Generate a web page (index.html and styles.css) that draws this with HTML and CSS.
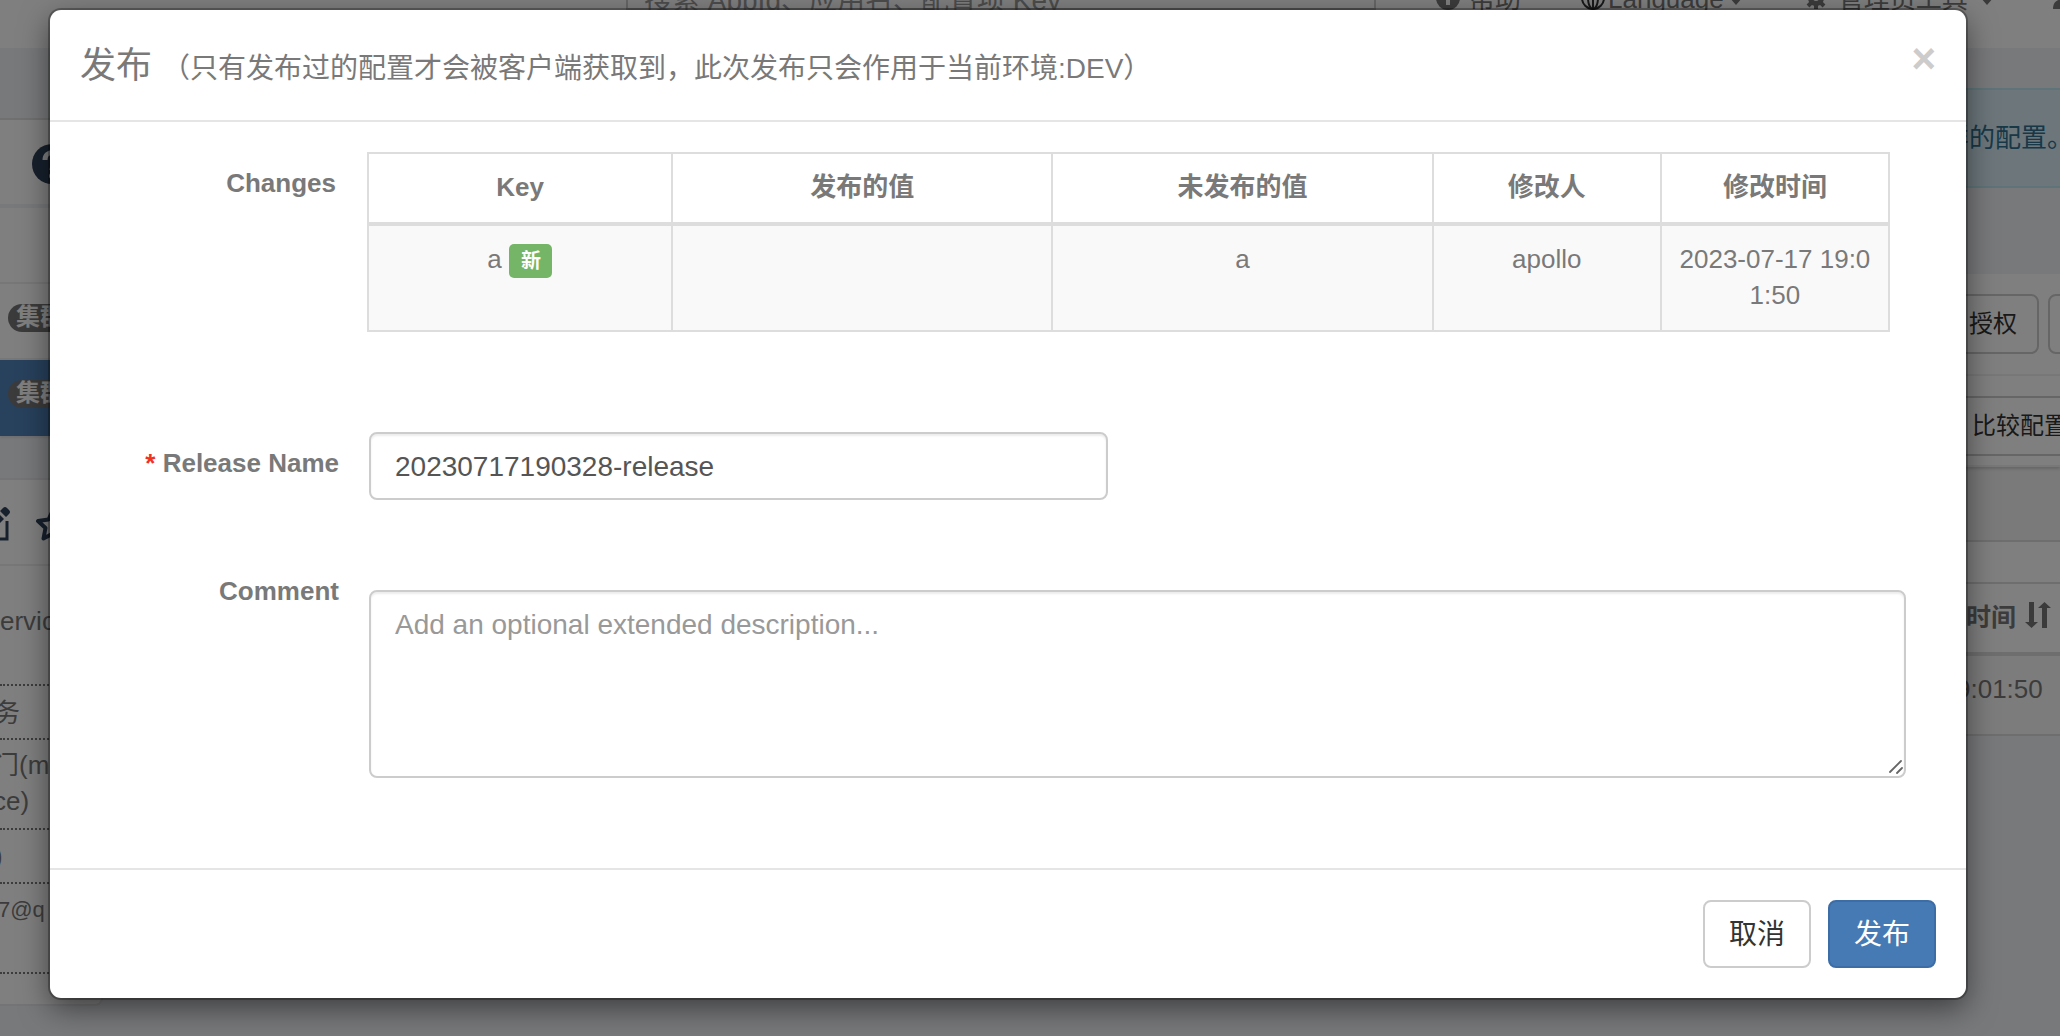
FILE: index.html
```html
<!DOCTYPE html>
<html lang="zh-CN">
<head>
<meta charset="utf-8">
<title>发布</title>
<link rel="stylesheet" href="styles.css">
</head>
<body>
<div class="page">
  <nav class="navbar">
    <div class="search">搜索 AppId、应用名、配置项 Key</div>
    <div class="nav-item nav-help">
      <svg width="24" height="24" viewBox="0 0 24 24"><circle cx="12" cy="12" r="12" fill="#777"/><path d="M12 5v14" stroke="#fff" stroke-width="4"/></svg>
      <span>帮助</span>
    </div>
    <div class="nav-item nav-lang">
      <svg width="24" height="24" viewBox="0 0 24 24" fill="none" stroke="#333" stroke-width="2"><circle cx="12" cy="12" r="11"/><ellipse cx="12" cy="12" rx="5" ry="11"/><path d="M12 1v22M1 12h22"/></svg>
      <span>Language</span><i class="caret"></i>
    </div>
    <div class="nav-item nav-admin">
      <svg width="22" height="22" viewBox="0 0 22 22"><circle cx="11" cy="11" r="5.500" fill="none" stroke="#777" stroke-width="5"/><path d="M11 0v4M11 18v4M0 11h4M18 11h4M3 3l3 3M16 16l3 3M19 3l-3 3M3 19l3-3" stroke="#777" stroke-width="4"/></svg>
      <span>管理员工具</span><i class="caret"></i>
    </div>
    <svg class="nav-user" width="26" height="26" viewBox="0 0 26 26"><circle cx="13" cy="7" r="6" fill="#777"/><path d="M0 26c0-8 5-10 13-10s13 2 13 10z" fill="#777"/></svg>
  </nav>

  <div class="columns">
    <aside class="sidebar">
      <section class="panel env-panel">
        <header class="env-head">
          <svg width="40" height="40" viewBox="0 0 40 40"><circle cx="20" cy="20" r="20" fill="#2f405a"/><path d="M13 16c0-10 15-10 14-1c0 5-7 5-7 11" fill="none" stroke="#fff" stroke-width="5"/><circle cx="20" cy="32" r="3" fill="#fff"/></svg>
        </header>
        <div class="env-row"></div>
        <div class="env-row"><span class="badge">集群</span></div>
        <div class="env-row active"><span class="badge">集群</span></div>
      </section>
      <section class="panel info-panel">
        <header class="info-head">
          <svg class="edit" width="36" height="36" viewBox="0 0 36 36"><path d="M20 7H3v26h30V15" fill="none" stroke="#2f405a" stroke-width="3"/><path d="M12 25l2-8L24 7l6 6L20 23zM26 5l3-3q2-2 4 0l2 2q2 2 0 4l-3 3z" fill="#2f405a"/></svg>
          <svg width="36" height="34" viewBox="0 0 36 34"><path d="M18 3l4.500 9.500 10.500 1.500-7.500 7 2 10.500-9.500-5-9.500 5 2-10.500-7.500-7 10.500-1.500z" fill="none" stroke="#2f405a" stroke-width="4" stroke-linejoin="round"/></svg>
        </header>
        <dl class="info">
          <dd class="info-a">ervice</dd>
          <dd class="info-b">务</dd>
          <dd class="info-c"><span>门(micro</span><br><span>ce)</span></dd>
          <dd class="info-d">)</dd>
          <dd class="info-e">7@q</dd>
        </dl>
      </section>
    </aside>

    <main class="main">
      <div class="alert">样的配置。</div>
      <section class="namespace">
        <div class="toolbar">
          <span class="tool">授权</span><span class="tool next"></span>
        </div>
        <div class="toolbar second"><span class="tool wide">比较配置</span></div>
        <div class="strip"></div>
        <div class="spacer"></div>
        <div class="items-head"><b>时间</b>
          <svg width="26" height="28" viewBox="0 0 26 28" fill="#777"><path d="M4 1h5v20h4l-6.500 6L0 21h4zM17 27h5V7h4l-6.500-6L13 7h4z"/></svg>
        </div>
        <div class="items-row">9:01:50</div>
      </section>
    </main>
  </div>
</div>

<div class="backdrop">
  <form class="modal">
    <header class="modal-header">
      <h4>发布 <small>（只有发布过的配置才会被客户端获取到，此次发布只会作用于当前环境:DEV）</small></h4>
      <span class="close">×</span>
    </header>
    <div class="modal-body">
      <div class="row changes">
        <label class="changes-label">Changes</label>
        <table>
          <colgroup><col class="c20"><col class="c25"><col class="c25"><col class="c15"><col class="c15"></colgroup>
          <thead><tr><th>Key</th><th>发布的值</th><th>未发布的值</th><th>修改人</th><th>修改时间</th></tr></thead>
          <tbody><tr><td>a <span class="tag">新</span></td><td></td><td>a</td><td>apollo</td><td class="time">2023-07-17 19:01:50</td></tr></tbody>
        </table>
      </div>
      <div class="row name-row">
        <label><span class="required">*</span> Release Name</label>
        <input class="control" type="text" value="20230717190328-release">
      </div>
      <div class="row comment-row">
        <label>Comment</label>
        <div class="area-wrap">
          <textarea class="control" placeholder="Add an optional extended description..."></textarea>
          <svg class="grip" width="16" height="16" viewBox="0 0 16 16" stroke="#666" stroke-width="1.800" stroke-linecap="round"><path d="M2 13L13 2M9 14l5-5"/></svg>
        </div>
      </div>
    </div>
    <footer class="modal-footer">
      <button type="button" class="btn">取消</button>
      <button type="button" class="btn primary">发布</button>
    </footer>
  </form>
</div>
</body>
</html>
```

FILE: styles.css
```css
* { box-sizing: border-box; }
body {
  margin: 0;
  width: 2060px;
  height: 1036px;
  overflow: hidden;
  color: #797979;
  font: 26px/36px "Liberation Sans", "Noto Sans CJK SC", sans-serif;
}
.page { height: 1036px; background: #f1f2f7; overflow: hidden; }

/* top bar, scrolled mostly out of view */
.navbar { height: 48px; background: #fff; display: flex; align-items: flex-start; overflow: hidden; }
.navbar > * { flex: none; }
.search {
  width: 750px; height: 28px; margin: -18px 0 0 626px; padding-left: 16px;
  border: 2px solid #ccc; border-top: 0; color: #999;
  font-size: 28px; line-height: 38px; white-space: nowrap;
}
.nav-item { display: flex; align-items: center; height: 36px; margin-top: -20px; }
.nav-item span { padding-top: 2px; }
.nav-item svg { margin-top: -1px; }
.nav-help { margin-left: 60px; gap: 9px; }
.nav-lang { margin-left: 60px; gap: 3px; }
.nav-admin { margin-left: 62px; gap: 11px; }
.nav-user { margin: -17px 0 0 59px; }
.caret { border: 7px solid transparent; border-top: 8px solid #777; border-bottom: 0; margin: 6px 0 0 2px; }
.nav-admin .caret { margin-left: 1px; }

.columns { display: flex; justify-content: space-between; }

/* left column */
.sidebar { width: 103px; padding-top: 70px; flex: none; }
.panel { background: #fff; overflow: hidden; }
.env-panel { height: 318px; border-top: 2px solid #e1e1e1; box-shadow: 0 2px 2px rgba(0,0,0,.08); }
.env-head { height: 88px; padding: 24px 0 0 32px; border-bottom: 4px solid #eff2f7; }
.env-row { display: flex; align-items: flex-start; height: 76px; padding: 20px 0 0 8px; border-bottom: 2px solid #eee; }
.env-row:last-child { height: 76px; border: 0; }
.env-row.active { background: #5083bb; }
.badge {
  display: flex; align-items: center; flex: none; width: 56px; height: 28px; padding: 0 0 2px 8px;
  border-radius: 14px; background: #777; color: #fff; font-size: 24px; font-weight: bold; white-space: nowrap;
}
.info-panel {
  height: 528px; margin-top: 42px; border: 2px solid #e8e8ec; border-left: 0; border-radius: 0 0 8px 0;
}
.info-head { display: flex; height: 86px; padding: 26px 0 0; border-bottom: 2px solid #eee; gap: 25px; }
.info-head svg { flex: none; }
.info-head svg + svg { margin-top: 1px; }
.info-head .edit { margin-left: -26px; }
.info { margin: 0; color: #797979; }
.info dd { margin: 0; border-bottom: 2px dotted #797979; overflow: hidden; white-space: nowrap; }
.info-a { height: 120px; padding-top: 37px; }
.info-b { height: 54px; padding-top: 9px; text-indent: -6px; }
.info-c { height: 90px; padding-top: 7px; }
.info-c span { margin-left: -7px; }
.info-d { height: 54px; padding-top: 8px; text-indent: -6px; }
.info-e { height: 90px; padding-top: 8px; font-size: 22px; text-indent: -2px; }

/* right column */
.main { width: 200px; padding-top: 40px; flex: none; }
.alert {
  height: 100px; padding: 30px 0 0 83px; border: solid #bce8f1; border-width: 2px 0;
  background: #d9edf7; color: #31708f; white-space: nowrap;
}
.namespace { margin-top: 86px; background: #fff; border-bottom: 2px solid #ddd; }
.toolbar { display: flex; gap: 9px; height: 102px; padding-top: 20px; border-bottom: 2px solid #f0f0f0; }
.tool {
  flex: none; width: 179px; height: 60px; padding-left: 107px; border: 2px solid #ccc; border-radius: 8px;
  color: #333; font-size: 24px; line-height: 55px; white-space: nowrap;
}
.tool.wide { width: 260px; padding-left: 110px; }
.toolbar.second { height: 91px; box-shadow: 0 2px 3px #ccc; position: relative; }
.strip { height: 75px; background: #f5f5f5; border-bottom: 2px solid #ddd; }
.spacer { height: 40px; }
.items-head {
  display: flex; height: 74px; padding: 15px 0 0 106px; gap: 9px;
  border-top: 2px solid #ddd; border-bottom: 4px solid #ddd; font-size: 25px;
}
.items-head svg { margin-top: 2px; }
.items-row { height: 78px; padding: 15px 0 0 96px; background: #f9f9f9; }

/* dialog */
.backdrop { position: absolute; inset: 0; padding: 10px 94px 0 50px; background: rgba(0,0,0,.5); }
.modal {
  width: 1916px; height: 988px; background: #fff; border-radius: 11px;
  box-shadow: 0 0 0 2px rgba(0,0,0,.28), 0 10px 30px rgba(0,0,0,.5);
}
.modal-header {
  display: flex; justify-content: space-between; height: 112px; padding: 31px 30px 0; border-bottom: 2px solid #e5e5e5;
}
h4 { margin: 0; font-size: 36px; font-weight: normal; line-height: 50px; white-space: nowrap; }
small { font-size: 28px; }
.close { color: #ccc; font-size: 42px; font-weight: bold; line-height: 36px; }
.modal-body { height: 746px; padding-top: 30px; }
.row { display: flex; }
.row > label { flex: none; width: 289px; text-align: right; font-weight: bold; }
.row > .changes-label { width: 286px; padding-top: 13px; }
.changes { height: 280px; gap: 31px; align-items: flex-start; }
table { width: 1523px; border-collapse: collapse; table-layout: fixed; text-align: center; }
.c20 { width: 20%; } .c25 { width: 25%; } .c15 { width: 15%; }
th, td { border: 2px solid #ddd; vertical-align: top; padding: 15px 16px; }
th { height: 71px; border-bottom-width: 4px; }
td { height: 107px; background: #f9f9f9; }
td:first-child { padding-right: 17px; }
.time { word-break: break-all; }
.tag {
  display: inline-block; height: 34px; padding: 0 11px 0 12px; border-radius: 5px; background: #75b567; color: #fff;
  font-size: 20px; font-weight: bold; line-height: 34px; vertical-align: top; margin-top: 3px;
}
.name-row { height: 158px; gap: 30px; }
.name-row label { padding-top: 13px; }
.required { color: #f0321e; }
.control {
  display: block; border: 2px solid #ccc; border-radius: 8px; padding: 13px 24px 11px; background: #fff; color: #555;
  font: 28px/40px "Liberation Sans", "Noto Sans CJK SC", sans-serif; box-shadow: inset 0 2px 2px rgba(0,0,0,.075);
}
input.control { width: 739px; height: 68px; }
.comment-row { gap: 30px; }
.comment-row label { margin-top: -17px; }
.area-wrap { position: relative; }
textarea.control { width: 1537px; height: 188px; resize: none; }
.control::placeholder { color: #999; opacity: 1; }
.grip { position: absolute; right: 2px; bottom: 3px; fill: none; }
.modal-footer {
  display: flex; justify-content: flex-end; gap: 17px; height: 130px; padding: 30px; border-top: 2px solid #e5e5e5;
}
.btn {
  width: 108px; height: 68px; padding: 2px 0 0; border: 2px solid #ccc; border-radius: 8px; background: #fff; color: #333;
  font: 28px/40px "Liberation Sans", "Noto Sans CJK SC", sans-serif;
}
.btn.primary { background: #467ab4; border-color: #3d6da5; color: #fff; }
```
